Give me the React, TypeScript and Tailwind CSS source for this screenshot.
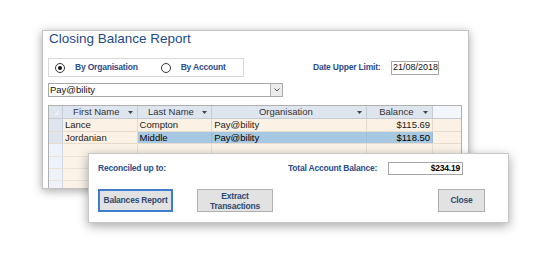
import React from "react";

const cols = [
  { key: "sel", w: 14 },
  { key: "first", w: 75, label: "First Name" },
  { key: "last", w: 75, label: "Last Name" },
  { key: "org", w: 156, label: "Organisation" },
  { key: "bal", w: 66, label: "Balance" },
  { key: "extra", w: 28 },
];

const rows = [
  { first: "Lance", last: "Compton", org: "Pay@bility", bal: "$115.69", selected: false },
  { first: "Jordanian", last: "Middle", org: "Pay@bility", bal: "$118.50", selected: true },
];

const emptyRows = [13, 12, 12, 12, 12];

function Arrow() {
  return (
    <svg width="5" height="3" viewBox="0 0 5 3" className="shrink-0">
      <path d="M0 0 H5 L2.5 3 Z" fill="#444" />
    </svg>
  );
}

function Radio({ checked }: { checked: boolean }) {
  return (
    <span className="w-[10px] h-[10px] rounded-full border border-[#333] bg-white flex items-center justify-center shrink-0">
      {checked && <span className="w-[4px] h-[4px] rounded-full bg-[#111]" />}
    </span>
  );
}

export default function App() {
  return (
    <div className="relative w-[552px] h-[261px] bg-white overflow-hidden font-['Liberation_Sans',Arial,sans-serif]">
      <div className="pt-[30px] pl-[42px]">
        <div className="w-[427px] h-[159px] border border-[#c2c2c2] bg-white shadow-[0_2px_9px_rgba(0,0,0,0.35)] overflow-hidden pl-[5px]">
          <div className="h-[27px] pl-[1px] text-[13.5px] leading-[14px] pt-[1px] text-[#1f4a8a]">
            Closing Balance Report
          </div>
          <div className="flex items-center h-[19px]">
            <div className="w-[196px] h-[19px] border border-[#d8d8d8] flex items-center pl-[6px]">
              <Radio checked />
              <span className="ml-[10px] text-[8.5px] tracking-[-0.2px] font-bold text-[#2b4d8c]">By Organisation</span>
              <span className="ml-[23px]"><Radio checked={false} /></span>
              <span className="ml-[10px] text-[8.5px] tracking-[-0.2px] font-bold text-[#2b4d8c]">By Account</span>
            </div>
            <span className="ml-[69px] text-[8.5px] tracking-[-0.2px] font-bold text-[#2b4d8c] whitespace-nowrap">Date Upper Limit:</span>
            <div className="ml-[11px] w-[48px] h-[14px] border border-[#a8a8a8] bg-white flex items-center justify-center text-[9px] text-[#111]">
              21/08/2018
            </div>
          </div>
          <div className="mt-[6px] w-[235px] h-[14px] border border-[#a9a9a9] bg-white flex">
            <div className="flex-1 pl-[1px] text-[9.5px] leading-[12px] text-[#111]">Pay@bility</div>
            <div className="w-[12px] border-l border-[#b5b5b5] bg-[#ececec] flex items-center justify-center">
              <svg width="6" height="4" viewBox="0 0 6 4"><path d="M0.5 0.5 L3 3 L5.5 0.5" stroke="#555" fill="none" strokeWidth="1" /></svg>
            </div>
          </div>
          <div className="mt-[8px] w-[414px] border border-[#b0b0b0] bg-white">
            <div className="flex h-[13px] bg-[#dfe5ee] border-b border-[#c5ccd6]">
              {cols.map((c) => (
                <div
                  key={c.key}
                  style={{ width: c.w }}
                  className={`h-full flex items-center border-r border-[#c5ccd6] ${c.key === "extra" ? "bg-[#f3f6fb] border-r-0" : ""}`}
                >
                  {c.key === "sel" && (
                    <svg width="14" height="12" viewBox="0 0 14 12"><path d="M4 10 L11 3 L11 10 Z" fill="#eef1f6" stroke="#d4d9e2" strokeWidth="0.5" /></svg>
                  )}
                  {c.label && (
                    <>
                      <span className="flex-1 text-center text-[9.5px] text-[#333] leading-[12px] pl-[2px]">{c.label}</span>
                      <span className="pr-[4px]"><Arrow /></span>
                    </>
                  )}
                </div>
              ))}
            </div>
            {rows.map((r, i) => (
              <div key={i} className={`flex border-b border-[#e7dccd] ${i === 0 ? "h-[13px]" : "h-[12px]"}`}>
                <div className="w-[14px] bg-[#dfe5ee] border-r border-[#c5ccd6]" />
                <div className="w-[75px] bg-[#fbf1e4] border-r border-[#e2d8cb] pl-[2px] text-[9.5px] leading-[12px] text-[#222]">{r.first}</div>
                <div className={`w-[75px] border-r pl-[2px] text-[9.5px] leading-[12px] ${r.selected ? "bg-[#a7c8e3] border-[#9bbbd6] text-black" : "bg-[#fbf1e4] border-[#e2d8cb] text-[#222]"}`}>{r.last}</div>
                <div className={`w-[156px] border-r pl-[2px] text-[9.5px] leading-[12px] ${r.selected ? "bg-[#a7c8e3] border-[#9bbbd6] text-black" : "bg-[#fbf1e4] border-[#e2d8cb] text-[#222]"}`}>{r.org}</div>
                <div className={`w-[66px] border-r pr-[2px] text-right text-[9.5px] leading-[12px] ${r.selected ? "bg-[#a7c8e3] border-[#9bbbd6] text-black" : "bg-[#fbf1e4] border-[#e2d8cb] text-[#222]"}`}>{r.bal}</div>
                <div className="w-[28px] bg-[#fbf1e4]" />
              </div>
            ))}
            {emptyRows.map((h, i) => (
              <div key={i} style={{ height: h }} className="flex border-b border-[#ece3d6]">
                <div className="w-[14px] bg-[#eef2fa] border-r border-[#d2d9e4]" />
                <div className="w-[75px] bg-[#fbf3e8] border-r border-[#e8dfd3]" />
                <div className="w-[75px] bg-[#fbf3e8] border-r border-[#e8dfd3]" />
                <div className="w-[156px] bg-[#fbf3e8] border-r border-[#e8dfd3]" />
                <div className="w-[66px] bg-[#fbf3e8] border-r border-[#e8dfd3]" />
                <div className="w-[28px] bg-[#fbf3e8]" />
              </div>
            ))}
          </div>
        </div>
      </div>

      <div className="absolute left-[88px] top-[153px] w-[421px] h-[70px] bg-white border border-[#c8c8c8] shadow-[0_3px_10px_rgba(0,0,0,0.35)] pl-[9px] pt-[8px]">
        <div className="flex items-center h-[13px]">
          <span className="w-[190px] text-[8.5px] tracking-[-0.2px] font-bold text-[#2b4d8c] whitespace-nowrap">Reconciled up to:</span>
          <span className="w-[100px] text-[8.5px] tracking-[-0.2px] font-bold text-[#2b4d8c] whitespace-nowrap">Total Account Balance:</span>
          <div className="w-[75px] h-[13px] border border-[#a5a5a5] bg-white flex items-center justify-end pr-[2px] text-[8.5px] tracking-[-0.2px] font-bold text-black">
            $234.19
          </div>
        </div>
        <div className="flex mt-[14px] h-[23px]">
          <button className="w-[75px] h-[23px] border-2 border-[#3d7fcf] bg-[#e2e2e2] text-[8.5px] tracking-[-0.2px] font-bold text-[#2d4a72] leading-[9px]">
            Balances Report
          </button>
          <button className="ml-[24px] w-[76px] h-[23px] border border-[#b0b0b0] bg-[#e2e2e2] text-[8.5px] tracking-[-0.2px] font-bold text-[#2d4a72] leading-[10px]">
            Extract
            <br />
            Transactions
          </button>
          <button className="ml-auto mr-[23px] w-[47px] h-[23px] border border-[#b0b0b0] bg-[#e2e2e2] text-[8.5px] tracking-[-0.2px] font-bold text-[#2d4a72] leading-[9px]">
            Close
          </button>
        </div>
      </div>
    </div>
  );
}
